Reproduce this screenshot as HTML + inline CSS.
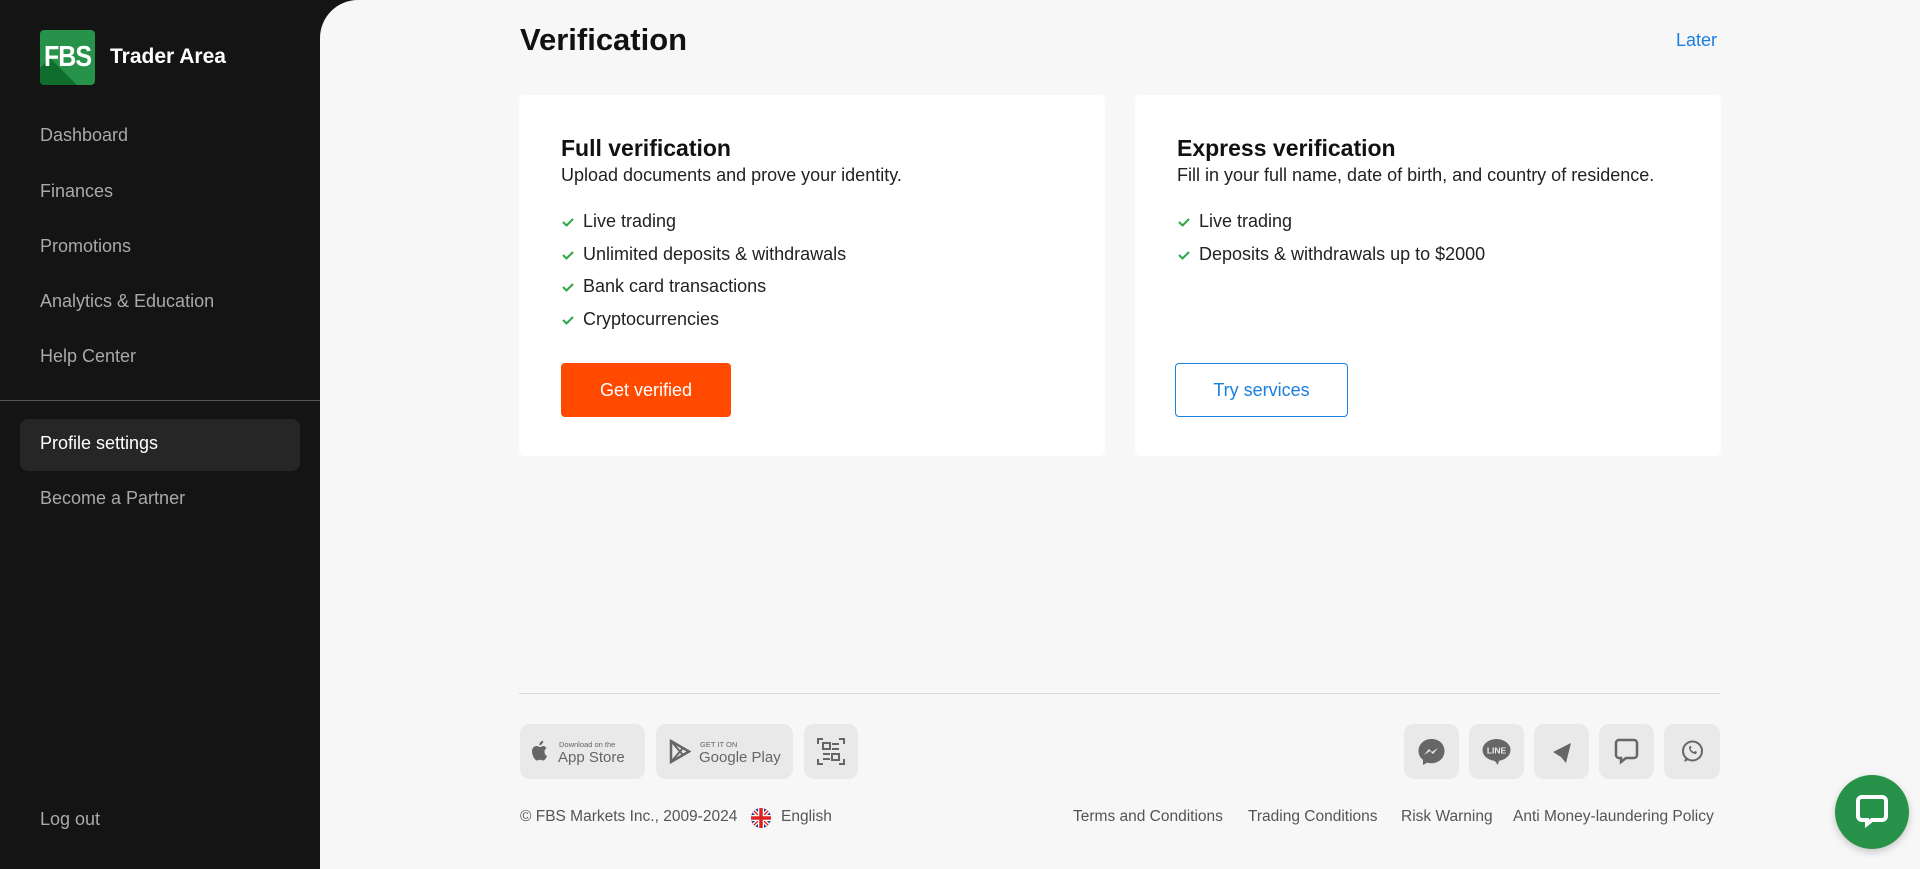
<!DOCTYPE html>
<html><head><meta charset="utf-8"><style>
*{box-sizing:border-box;margin:0;padding:0}
body{width:1920px;height:869px;background:#141414;font-family:"Liberation Sans",sans-serif;position:relative;overflow:hidden}
.side{position:absolute;left:0;top:0;width:320px;height:869px;background:#141414}
.logo{position:absolute;left:40px;top:30px;width:55px;height:55px;border-radius:4px;background:#26924a;overflow:hidden}
.logo:after{content:"";position:absolute;left:10px;top:28px;width:80px;height:40px;background:#0f6e2e;transform:rotate(45deg);transform-origin:0 0}
.logo span{position:absolute;left:0;top:0;width:55px;line-height:55px;text-align:center;color:#fff;font-weight:bold;font-size:25px;z-index:2;letter-spacing:-1px;transform:scaleY(1.15)}
.brand{position:absolute;left:110px;top:45px;color:#fff;font-weight:bold;font-size:21px}
.nav{position:absolute;left:40px;color:#a9a9a9;font-size:18px;line-height:22px}
.div{position:absolute;left:0;top:400px;width:320px;height:1px;background:#555}
.act{position:absolute;left:20px;top:419px;width:280px;height:52px;border-radius:8px;background:#262626}
.main{position:absolute;left:320px;top:0;width:1600px;height:869px;background:#f7f7f7;border-top-left-radius:38px}
.t{position:absolute;color:#111}
.card{position:absolute;top:95px;width:586px;height:361px;background:#fff;border-radius:6px}
.card h2{position:absolute;left:42px;top:40px;font-size:23px;color:#111}
.card .sub{position:absolute;left:42px;top:70px;font-size:18px;color:#222}
.li{position:absolute;left:42px;font-size:18px;color:#222}
.li svg{position:absolute;left:0;top:5px}
.li span{position:absolute;left:22px;top:0;white-space:nowrap}
.btn{position:absolute;left:42px;top:268px;width:170px;height:54px;border-radius:4px;font-size:18px;line-height:54px;text-align:center}
.sb{position:absolute;top:724px;height:55px;border-radius:10px;background:#e9e9e9}
.foot{position:absolute;top:808px;font-size:15.5px;color:#555;white-space:nowrap}
</style></head><body>
<div class="side">
<div class="logo"><span>FBS</span></div>
<div class="brand">Trader Area</div>
<div class="nav" style="top:124px">Dashboard</div>
<div class="nav" style="top:180px">Finances</div>
<div class="nav" style="top:235px">Promotions</div>
<div class="nav" style="top:290px">Analytics &amp; Education</div>
<div class="nav" style="top:345px">Help Center</div>
<div class="div"></div>
<div class="act"></div>
<div class="nav" style="top:432px;color:#fff">Profile settings</div>
<div class="nav" style="top:487px">Become a Partner</div>
<div class="nav" style="top:808px">Log out</div>
</div>
<div class="main"></div>
<div class="t" style="left:520px;top:22px;font-size:31px;font-weight:bold">Verification</div>
<div class="t" style="left:1676px;top:30px;font-size:18px;color:#1a7fe0">Later</div>

<div class="card" style="left:519px">
<h2>Full verification</h2>
<div class="sub">Upload documents and prove your identity.</div>
<div class="li" style="top:116px"><svg width="14" height="12"><path d="M2 6l3.5 3.5L12 3" stroke="#2aa645" stroke-width="2" fill="none"/></svg><span>Live trading</span></div>
<div class="li" style="top:149px"><svg width="14" height="12"><path d="M2 6l3.5 3.5L12 3" stroke="#2aa645" stroke-width="2" fill="none"/></svg><span>Unlimited deposits &amp; withdrawals</span></div>
<div class="li" style="top:181px"><svg width="14" height="12"><path d="M2 6l3.5 3.5L12 3" stroke="#2aa645" stroke-width="2" fill="none"/></svg><span>Bank card transactions</span></div>
<div class="li" style="top:214px"><svg width="14" height="12"><path d="M2 6l3.5 3.5L12 3" stroke="#2aa645" stroke-width="2" fill="none"/></svg><span>Cryptocurrencies</span></div>
<div class="btn" style="background:#ff4a00;color:#fff">Get verified</div>
</div>
<div class="card" style="left:1135px">
<h2>Express verification</h2>
<div class="sub">Fill in your full name, date of birth, and country of residence.</div>
<div class="li" style="top:116px"><svg width="14" height="12"><path d="M2 6l3.5 3.5L12 3" stroke="#2aa645" stroke-width="2" fill="none"/></svg><span>Live trading</span></div>
<div class="li" style="top:149px"><svg width="14" height="12"><path d="M2 6l3.5 3.5L12 3" stroke="#2aa645" stroke-width="2" fill="none"/></svg><span>Deposits &amp; withdrawals up to $2000</span></div>
<div class="btn" style="left:40px;width:173px;border:1px solid #1a7fe0;color:#1a7fe0;line-height:52px">Try services</div>
</div>

<div style="position:absolute;left:519px;top:693px;width:1201px;height:1px;background:#d9d9d9"></div>
<div class="sb" style="left:520px;width:125px"><svg width="125" height="55"><path d="M24 22c-2 0-3 1-4 1s-2-1-3.5-1C14 22 12 24 12 27.5c0 4 3 9 5 9 1 0 2-.7 3-.7s2 .7 3 .7c2 0 3.5-3 4-4.5-2-1-2.5-3-2.5-4.3 0-1.7 1-3 2-3.5-1-1.3-2-2-2.5-2.2zM22 20c1-1 1.3-2.2 1.2-3.2-1 .1-2.2.7-2.8 1.5-.6.6-1 1.8-.9 2.9 1 .1 2-.5 2.5-1.2z" fill="#666"/><text x="39" y="23" font-size="7.5" fill="#666" font-family="Liberation Sans">Download on the</text><text x="38" y="38" font-size="15" fill="#666" font-family="Liberation Sans">App Store</text></svg></div>
<div class="sb" style="left:656px;width:137px"><svg width="137" height="55"><path d="M15 17v21l18-10.5z" fill="none" stroke="#666" stroke-width="2.5"/><path d="M15 17l12 14M15 38l12-14" stroke="#666" stroke-width="2"/><text x="44" y="23" font-size="7.5" fill="#666" font-family="Liberation Sans">GET IT ON</text><text x="43" y="38" font-size="15" fill="#666" font-family="Liberation Sans">Google Play</text></svg></div>
<div class="sb" style="left:804px;width:54px"><svg width="54" height="55" fill="none" stroke="#666" stroke-width="2"><path d="M14 20v-5h5M35 15h5v5M40 35v5h-5M19 40h-5v-5"/><rect x="19" y="19" width="7" height="6"/><rect x="28" y="30" width="7" height="6"/><path d="M28 20h7M28 25h7M19 30h7M19 35h7"/></svg></div>

<div class="sb" style="left:1404px;width:55px"><svg width="55" height="55"><path d="M27.5 15c-7.5 0-13 5.3-13 12 0 3.7 1.7 6.8 4.5 8.8V41l4.2-2.4c1.4.4 2.8.6 4.3.6 7.5 0 13-5.3 13-12.2S35 15 27.5 15z" fill="#666"/><path d="M20 31l5-6 3 3 6-4-5 6-3-3z" fill="#eee"/></svg></div>
<div class="sb" style="left:1469px;width:55px"><svg width="55" height="55"><ellipse cx="27.5" cy="26" rx="14" ry="11" fill="#666"/><path d="M25 36l4 5 1-5z" fill="#666"/><text x="27.5" y="29.5" font-size="8.5" font-weight="bold" fill="#eee" text-anchor="middle" font-family="Liberation Sans">LINE</text></svg></div>
<div class="sb" style="left:1534px;width:55px"><svg width="55" height="55"><path d="M19 28l18-9-5 20-5-6z" fill="#666"/></svg></div>
<div class="sb" style="left:1599px;width:55px"><svg width="55" height="55"><path d="M17 19a3 3 0 0 1 3-3h15a3 3 0 0 1 3 3v12a3 3 0 0 1-3 3h-8l-5 4v-4h-2a3 3 0 0 1-3-3z" fill="none" stroke="#666" stroke-width="2.5"/></svg></div>
<div class="sb" style="left:1664px;width:56px"><svg width="56" height="55"><circle cx="28.5" cy="27" r="9.5" fill="none" stroke="#666" stroke-width="2"/><path d="M20 38l1.5-4.5 3 2.5z" fill="#666"/><path d="M25 23c0 4 3 7 7 7l1-2-2-1-1 1c-1.5-.5-3-2-3.5-3.5l1-1-1-2z" fill="#666"/></svg></div>

<div class="foot" style="left:520px">© FBS Markets Inc., 2009-2024</div>
<svg style="position:absolute;left:751px;top:808px" width="20" height="20"><clipPath id="c"><circle cx="10" cy="10" r="10"/></clipPath><g clip-path="url(#c)"><rect width="20" height="20" fill="#2a3f8f"/><path d="M0 0L20 20M20 0L0 20" stroke="#fff" stroke-width="4"/><path d="M0 0L20 20M20 0L0 20" stroke="#d22" stroke-width="1.5"/><path d="M10 0v20M0 10h20" stroke="#fff" stroke-width="6"/><path d="M10 0v20M0 10h20" stroke="#d22" stroke-width="3.5"/></g></svg>
<div class="foot" style="left:781px">English</div>
<div class="foot" style="left:1073px">Terms and Conditions</div>
<div class="foot" style="left:1248px">Trading Conditions</div>
<div class="foot" style="left:1401px">Risk Warning</div>
<div class="foot" style="left:1513px">Anti Money-laundering Policy</div>

<div style="position:absolute;left:1835px;top:775px;width:74px;height:74px;border-radius:50%;background:#26924a;box-shadow:0 3px 8px rgba(0,0,0,.2)"><svg width="74" height="74"><path d="M23 26a4 4 0 0 1 4-4h20a4 4 0 0 1 4 4v15a4 4 0 0 1-4 4H37l-5 4v-4h-5a4 4 0 0 1-4-4z" fill="none" stroke="#fff" stroke-width="4"/></svg></div>
</body></html>
